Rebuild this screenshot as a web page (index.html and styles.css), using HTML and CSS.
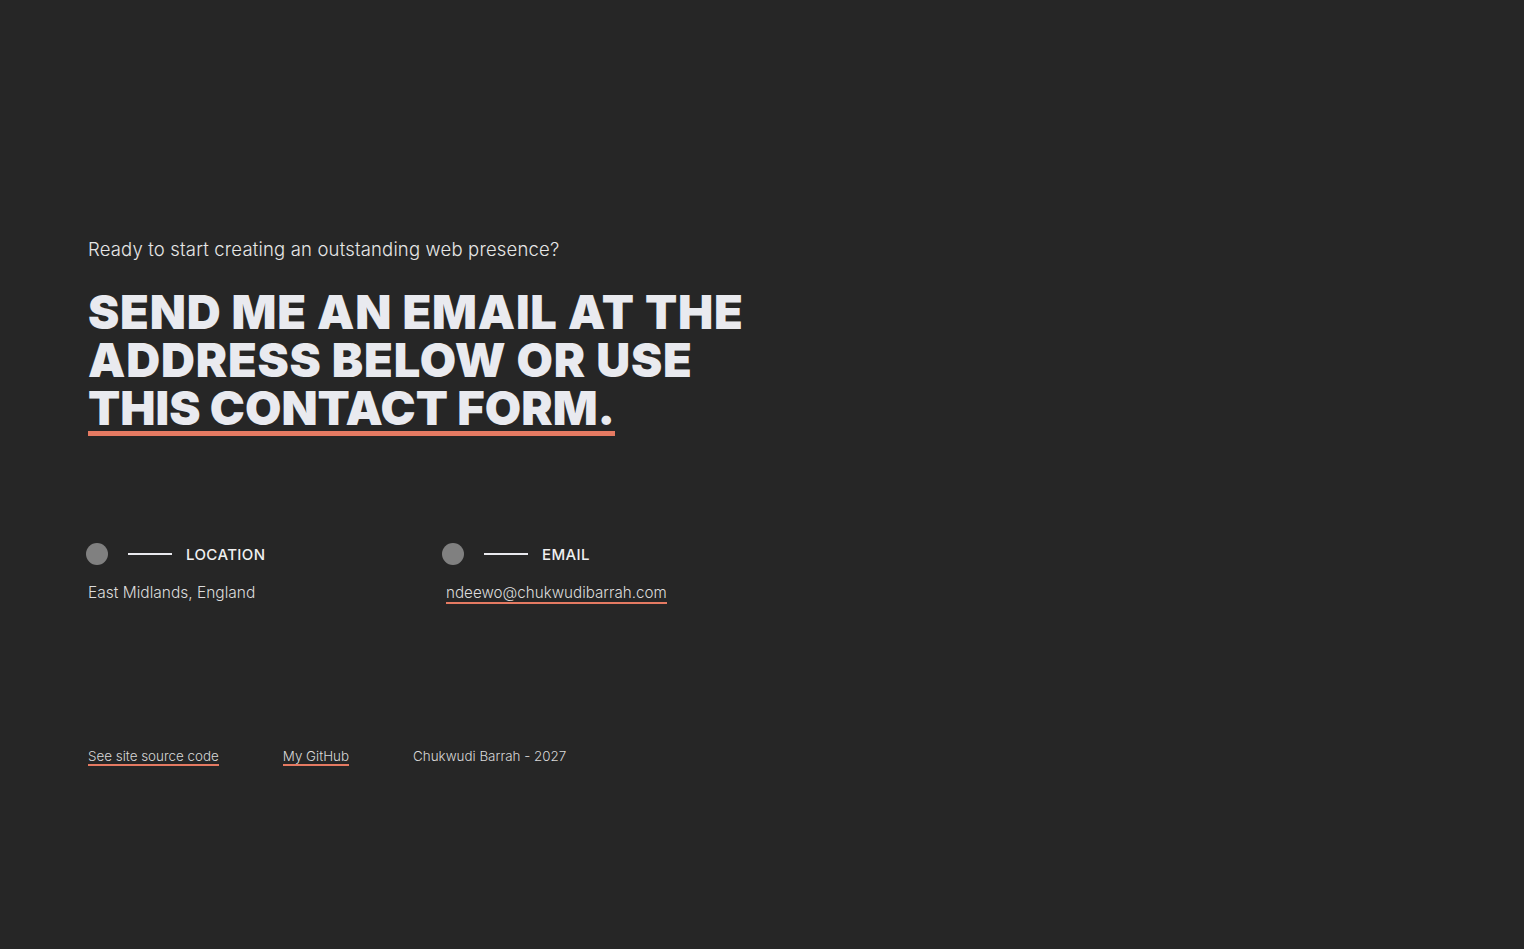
FILE: index.html
```html
<!DOCTYPE html>
<html lang="en">
<head>
<meta charset="utf-8">
<title>Contact</title>
<link rel="stylesheet" href="styles.css">
</head>
<body>
<main class="page">
  <section class="contact">
    <p class="lead">Ready to start creating an outstanding web presence?</p>
    <h1 class="title">Send me an email at the address below or use <a class="title-link" href="#">this contact form.</a></h1>
    <div class="details">
      <div class="detail">
        <div class="detail-head">
          <span class="dot"></span>
          <span class="rule"></span>
          <span class="label">Location</span>
        </div>
        <p class="detail-text">East Midlands, England</p>
      </div>
      <div class="detail detail-email">
        <div class="detail-head">
          <span class="dot"></span>
          <span class="rule"></span>
          <span class="label">Email</span>
        </div>
        <p class="detail-text"><a class="link" href="#">ndeewo@chukwudibarrah.com</a></p>
      </div>
    </div>
  </section>
  <footer class="footer">
    <a class="foot-link" href="#">See site source code</a>
    <a class="foot-link" href="#">My GitHub</a>
    <span class="foot-text">Chukwudi Barrah - 2027</span>
  </footer>
</main>
</body>
</html>
```
FILE: styles.css
```css
html, body {
  margin: 0;
  padding: 0;
  background: #262626;
  color: #e9e9ee;
  font-family: "Inter", "Liberation Sans", sans-serif;
}
.page {
  min-height: 949px;
  padding: 236px 88px 0;
  box-sizing: border-box;
}
.contact {
  display: flex;
  flex-direction: column;
}
.lead {
  margin: 0;
  font-size: 18.5px;
  font-weight: 300;
  letter-spacing: 0.17px;
  color: #e6e6e6;
  line-height: 26px;
}
.title {
  margin: 26px 0 0;
  width: 700px;
  font-size: 47px;
  line-height: 48px;
  font-weight: 900;
  text-transform: uppercase;
  color: #e9eaef;
  letter-spacing: 0.8px;
}
.title-link {
  color: inherit;
  text-decoration: none;
  letter-spacing: 0;
  background-image: linear-gradient(#e57a62, #e57a62);
  background-repeat: no-repeat;
  background-size: 100% 5px;
  background-position: 0 100%;
}
.details {
  display: flex;
  margin-top: 110px;
}
.detail {
  width: 358px;
}
.detail-head {
  display: flex;
  align-items: center;
  gap: 20px;
  margin-left: -2px;
  height: 24px;
}
.detail-email .detail-head {
  margin-left: -4px;
}
.dot {
  width: 22px;
  height: 22px;
  border-radius: 50%;
  background: #808080;
  flex: none;
}
.rule {
  width: 44px;
  height: 2px;
  background: #e9e9ee;
}
.label {
  margin-left: -6px;
  font-size: 15px;
  font-weight: 500;
  text-transform: uppercase;
  letter-spacing: 0.4px;
  color: #f0f0f0;
}
.detail-text {
  margin: 17px 0 0;
  font-size: 15.5px;
  font-weight: 300;
  color: #dcdcdc;
}
.detail-email .detail-text {
  font-size: 15.2px;
}
.link {
  color: inherit;
  text-decoration: none;
  border-bottom: 2px solid #e57a62;
}
.footer {
  display: flex;
  gap: 64px;
  margin-top: 146px;
  font-size: 13.4px;
  font-weight: 300;
  color: #d8d8d8;
}
.foot-link {
  color: inherit;
  text-decoration: none;
  border-bottom: 2px solid #e57a62;
}
```
